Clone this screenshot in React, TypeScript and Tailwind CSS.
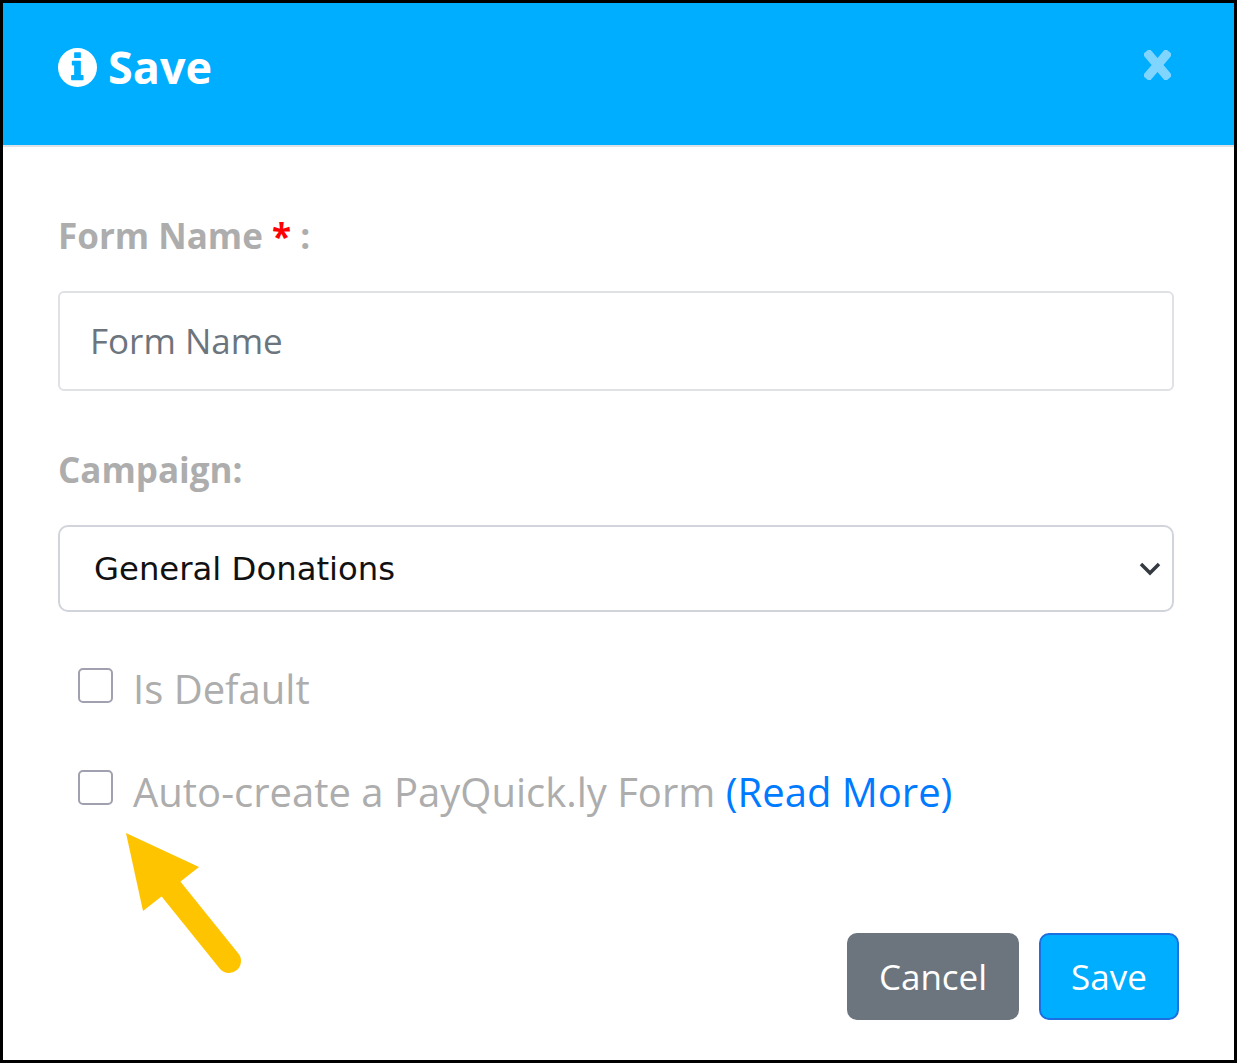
import React from 'react';

// Solid info circle with a serif "i" cut out
const InfoIcon = () => (
  <svg viewBox="0 0 116 116" className="w-[39px] h-[39px] shrink-0">
    <path
      fill="#fff"
      fillRule="evenodd"
      d="M58 0a58 58 0 1 0 0 116A58 58 0 1 0 58 0zM50 13h16a2 2 0 0 1 2 2v13a2 2 0 0 1-2 2H50a2 2 0 0 1-2-2V15a2 2 0 0 1 2-2zM43 38h23a2 2 0 0 1 2 2v40h6a2 2 0 0 1 2 2v12a2 2 0 0 1-2 2H41a2 2 0 0 1-2-2V82a2 2 0 0 1 2-2h7V52h-5a2 2 0 0 1-2-2V40a2 2 0 0 1 2-2z"
    />
  </svg>
);

const CloseIcon = () => (
  <svg viewBox="0 0 27 30" className="w-[27px] h-[30px]">
    <path d="M5 5 L22 25 M22 5 L5 25" stroke="#80d5ff" strokeWidth="9" strokeLinecap="square" fill="none" />
  </svg>
);

const Arrow = () => (
  <svg viewBox="0 0 130 150" className="absolute left-[120px] top-[828px] w-[130px] h-[150px]">
    <path d="M51 61 L109 133" stroke="#ffc400" strokeWidth="24" strokeLinecap="round" fill="none" />
    <path d="M6 5 L79 39 L23 83 Z" fill="#ffc400" />
  </svg>
);

export default function App() {
  return (
    <div className="relative w-[1237px] h-[1063px] bg-white border-[3px] border-black font-['Open_Sans',sans-serif] flex flex-col overflow-hidden">
      <header className="h-[144px] shrink-0 bg-[#00aeff] border-b-2 border-[#dee2e6] flex items-start justify-between pl-[55px] pr-[63px] pt-[39px]">
        <h1 className="flex items-center gap-[11px] text-white font-bold text-[45px] leading-[50px]">
          <InfoIcon />
          <span>Save</span>
        </h1>
        <button className="mt-[8px]"><CloseIcon /></button>
      </header>

      <main className="flex-1 flex flex-col pl-[55px] pr-[60px] pt-[67px]">
        <label className="text-[35px] leading-[44px] font-bold text-[#adadad]">
          Form Name <span className="text-[#ff0000]">*</span> :
        </label>
        <input
          placeholder="Form Name"
          className="mt-[33px] h-[100px] w-full border-2 border-[#dfe1e5] rounded-[6px] pl-[30px] pr-[31px] pb-[2px] text-[35px] text-[#495057] placeholder:text-[#6c757d] outline-none"
        />
        <label className="mt-[57px] text-[35px] leading-[44px] font-bold text-[#adadad]">Campaign:</label>
        <div className="mt-[33px] h-[87px] w-full border-2 border-[#d1d5db] rounded-[10px] flex items-center justify-between pl-[34px] pr-[10px]">
          <span className="pt-[2px] font-['DejaVu_Sans',sans-serif] text-[32.3px] text-[#111]">General Donations</span>
          <svg viewBox="0 0 24 16" className="w-[24px] h-[16px]">
            <path d="M3 3 L12 12 L21 3" stroke="#343a40" strokeWidth="3.5" fill="none" />
          </svg>
        </div>

        <div className="mt-[56px] pl-[20px] flex items-start gap-[20px] text-[#adadad] text-[40px] leading-[44px]">
          <input type="checkbox" className="appearance-none w-[35px] h-[35px] shrink-0 border-2 border-[#a0a0b0] rounded-[5px] bg-white" />
          <span className="-mt-px">Is Default</span>
        </div>
        <div className="mt-[59px] pl-[20px] flex items-start gap-[20px] text-[#adadad] text-[40px] leading-[44px]">
          <input type="checkbox" className="appearance-none w-[35px] h-[35px] shrink-0 border-2 border-[#a0a0b0] rounded-[5px] bg-white" />
          <span>Auto-create a PayQuick.ly Form <a className="text-[#007bff]">(Read More)</a></span>
        </div>

        <div className="mt-auto mb-[40px] -mr-[5px] flex justify-end gap-[20px]">
          <button className="h-[87px] w-[172px] rounded-[10px] bg-[#6c757d] text-white text-[35px] pt-[2px]">Cancel</button>
          <button className="h-[87px] w-[140px] rounded-[10px] bg-[#00aeff] border-2 border-[#1b6fe0] text-white text-[35px] pt-[2px]">Save</button>
        </div>
      </main>
      <div className="absolute -left-[3px] -top-[3px]"><Arrow /></div>
    </div>
  );
}
